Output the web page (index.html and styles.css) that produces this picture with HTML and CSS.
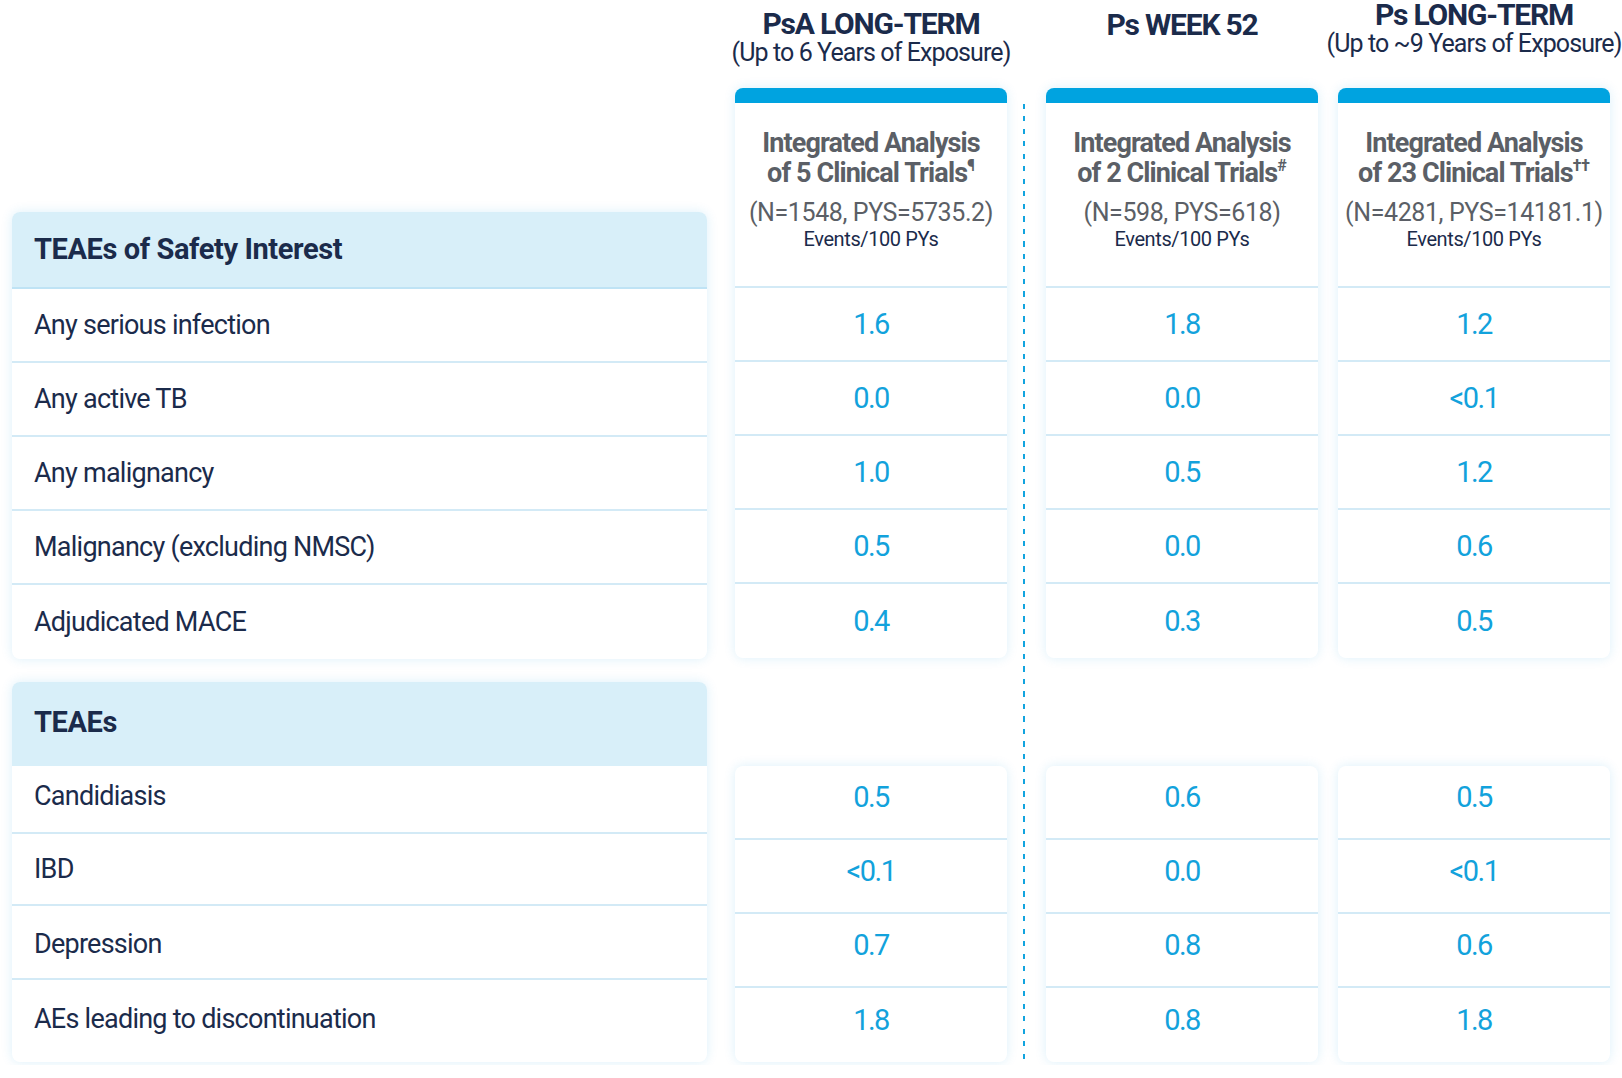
FILE: index.html
```html
<!DOCTYPE html>
<html lang="en">
<head>
<meta charset="utf-8">
<title>Safety data</title>
<link rel="stylesheet" href="styles.css">
</head>
<body>
<div class="page">
  <div class="labels">
    <section class="card label-card">
      <div class="label-head">TEAEs of Safety Interest</div>
      <div class="label-row">Any serious infection</div>
      <div class="label-row">Any active TB</div>
      <div class="label-row">Any malignancy</div>
      <div class="label-row">Malignancy (excluding NMSC)</div>
      <div class="label-row last">Adjudicated MACE</div>
    </section>
    <section class="card label-card">
      <div class="label-head tall">TEAEs</div>
      <div class="label-row h68">Candidiasis</div>
      <div class="label-row h72">IBD</div>
      <div class="label-row h74">Depression</div>
      <div class="label-row h82 last">AEs leading to discontinuation</div>
    </section>
  </div>

  <div class="col col-psa">
    <div class="col-title">
      <div class="title-main">PsA LONG-TERM</div>
      <div class="title-sub">(Up to 6 Years of Exposure)</div>
    </div>
    <section class="card data-card">
      <div class="data-head">
        <div class="head-bold">Integrated Analysis</div>
        <div class="head-bold">of 5 Clinical Trials<sup>¶</sup></div>
        <div class="head-n">(N=1548, PYS=5735.2)</div>
        <div class="head-unit">Events/100 PYs</div>
      </div>
      <div class="cell">1.6</div>
      <div class="cell">0.0</div>
      <div class="cell">1.0</div>
      <div class="cell">0.5</div>
      <div class="cell last">0.4</div>
    </section>
    <section class="card data-card bottom">
      <div class="cell h68">0.5</div>
      <div class="cell h72">&lt;0.1</div>
      <div class="cell h74">0.7</div>
      <div class="cell h82 last">1.8</div>
    </section>
  </div>

  <div class="divider"></div>

  <div class="col col-wk">
    <div class="col-title">
      <div class="title-main">Ps WEEK 52</div>
    </div>
    <section class="card data-card">
      <div class="data-head">
        <div class="head-bold">Integrated Analysis</div>
        <div class="head-bold">of 2 Clinical Trials<sup>#</sup></div>
        <div class="head-n">(N=598, PYS=618)</div>
        <div class="head-unit">Events/100 PYs</div>
      </div>
      <div class="cell">1.8</div>
      <div class="cell">0.0</div>
      <div class="cell">0.5</div>
      <div class="cell">0.0</div>
      <div class="cell last">0.3</div>
    </section>
    <section class="card data-card bottom">
      <div class="cell h68">0.6</div>
      <div class="cell h72">0.0</div>
      <div class="cell h74">0.8</div>
      <div class="cell h82 last">0.8</div>
    </section>
  </div>

  <div class="col col-ps">
    <div class="col-title">
      <div class="title-main">Ps LONG-TERM</div>
      <div class="title-sub">(Up to ~9 Years of Exposure)</div>
    </div>
    <section class="card data-card">
      <div class="data-head">
        <div class="head-bold">Integrated Analysis</div>
        <div class="head-bold">of 23 Clinical Trials<sup>††</sup></div>
        <div class="head-n">(N=4281, PYS=14181.1)</div>
        <div class="head-unit">Events/100 PYs</div>
      </div>
      <div class="cell">1.2</div>
      <div class="cell">&lt;0.1</div>
      <div class="cell">1.2</div>
      <div class="cell">0.6</div>
      <div class="cell last">0.5</div>
    </section>
    <section class="card data-card bottom">
      <div class="cell h68">0.5</div>
      <div class="cell h72">&lt;0.1</div>
      <div class="cell h74">0.6</div>
      <div class="cell h82 last">1.8</div>
    </section>
  </div>
</div>
</body>
</html>
```

FILE: styles.css
```css
* { box-sizing: border-box; }

body {
  margin: 0;
  background: #ffffff;
  color: #1b2b4b;
  font-family: Roboto, "Liberation Sans", sans-serif;
}

.page {
  display: flex;
  align-items: flex-start;
  padding-left: 12px;
}

.card {
  background: #ffffff;
  border-radius: 8px;
  overflow: hidden;
  box-shadow: 0 0 12px rgba(0, 150, 220, 0.14);
}

/* left label column */
.labels {
  width: 695px;
  padding-top: 212px;
  display: flex;
  flex-direction: column;
  gap: 23px;
}

.label-head {
  height: 77px;
  background: #d8eff9;
  border-bottom: 2px solid #bfe3f5;
  padding-left: 22px;
  padding-bottom: 2px;
  display: flex;
  align-items: center;
  font-weight: 700;
  font-size: 29px;
  letter-spacing: -0.4px;
  color: #1b2b4b;
}

.label-head.tall {
  height: 84px;
  border-bottom: none;
  padding-bottom: 4px;
}

.label-row {
  height: 74px;
  border-bottom: 2px solid #d3eaf6;
  padding-left: 22px;
  display: flex;
  align-items: center;
  font-size: 27px;
  letter-spacing: -0.75px;
  color: #1b2b4b;
}

.label-row.last,
.cell.last { border-bottom: none; }

.h68 { height: 68px; }
.h72 { height: 72px; }
.h74 { height: 74px; }
.h82 { height: 82px; }

.label-row.h68 { padding-bottom: 6px; }
.label-row.h74 { padding-top: 4px; }
.label-row.h82 { padding-bottom: 4px; }

/* data columns */
.col {
  width: 272px;
  display: flex;
  flex-direction: column;
}

.col-psa { margin-left: 28px; }
.col-ps { margin-left: 20px; }

.col-title {
  height: 88px;
  display: flex;
  flex-direction: column;
  align-items: center;
  text-align: center;
  color: #1b2b4b;
}

.col-psa .col-title { padding-top: 9px; }
.col-wk .col-title { padding-top: 10px; }
.col-ps .col-title { padding-top: 0; }

.title-main {
  font-size: 30px;
  line-height: 30px;
  font-weight: 700;
  letter-spacing: -1.2px;
  white-space: nowrap;
}

.title-sub {
  font-size: 25px;
  line-height: 28px;
  letter-spacing: -0.9px;
  white-space: nowrap;
}

.data-card {
  border-top: 15px solid #00a3e0;
}

.data-card.bottom {
  border-top: none;
  margin-top: 108px;
}

.data-head {
  height: 185px;
  border-bottom: 2px solid #d3eaf6;
  padding-top: 25px;
  text-align: center;
}

.head-bold {
  font-size: 27px;
  line-height: 30px;
  font-weight: 700;
  letter-spacing: -0.9px;
  color: #5b5f66;
  white-space: nowrap;
}

.head-bold sup {
  font-size: 16px;
  font-weight: 700;
  line-height: 0;
  vertical-align: 11px;
  letter-spacing: 0;
}

.head-n {
  margin-top: 10px;
  font-size: 25px;
  line-height: 30px;
  letter-spacing: -0.4px;
  color: #5b5f66;
  white-space: nowrap;
}

.head-unit {
  font-size: 20px;
  line-height: 22px;
  letter-spacing: -0.4px;
  color: #1b2b4b;
}

.cell {
  height: 74px;
  border-bottom: 2px solid #d3eaf6;
  display: flex;
  align-items: center;
  justify-content: center;
  font-size: 29px;
  letter-spacing: -1.5px;
  color: #12a2dc;
}

.data-card.bottom .cell { padding-bottom: 10px; }

.divider {
  width: 2px;
  height: 961px;
  margin: 104px 21px 0 16px;
  background: repeating-linear-gradient(to bottom, #12a4df 0, #12a4df 5px, transparent 5px, transparent 12.5px);
}
```
